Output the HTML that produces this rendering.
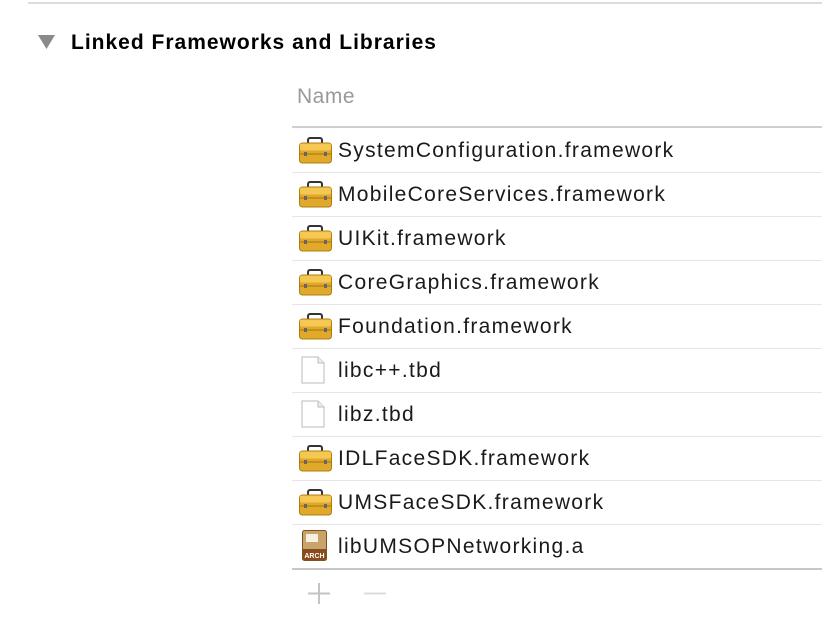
<!DOCTYPE html>
<html><head><style>
body{margin:0;width:822px;height:626px;background:#fff;font-family:"Liberation Sans",sans-serif;position:relative;overflow:hidden}
.a{position:absolute}
.row{position:absolute;left:292px;right:0;height:44px;border-bottom:1px solid #e6e6e6}
.row span{position:absolute;left:46px;top:11px;font-size:21px;letter-spacing:1.3px;color:#1a1a1a}
.row svg{position:absolute;left:7px;top:9px}
</style></head><body>
<div class="a" style="left:28px;right:0;top:2px;height:2px;background:#dcdcdc"></div>
<svg class="a" style="left:38px;top:35px" width="17" height="14"><polygon points="0,0 17,0 8.5,14" fill="#8a8a8a"/></svg>
<div class="a" style="left:71px;top:31px;font-size:21px;letter-spacing:1px;font-weight:bold;color:#000">Linked Frameworks and Libraries</div>
<div class="a" style="left:297px;top:85px;font-size:21px;letter-spacing:0.5px;color:#999">Name</div>
<div class="a" style="left:292px;right:0;top:126px;height:2px;background:#cfcfcf"></div>
<svg width="0" height="0" style="position:absolute"><defs>
<g id="tb"><rect x="9" y="1" width="14" height="6" rx="2" fill="none" stroke="#333" stroke-width="2"/><rect x="0.5" y="6" width="32" height="20" rx="3" fill="#e0a92a" stroke="#b07d12"/><rect x="1" y="6.5" width="31" height="7" rx="2" fill="#f4c852"/><line x1="1" y1="17" x2="32" y2="17" stroke="#a87414"/><rect x="5" y="15" width="3" height="4" fill="#666"/><rect x="25" y="15" width="3" height="4" fill="#666"/></g>
<g id="fl"><path d="M4 1H20L26 7V27H4Z" fill="#fff" stroke="#bbb"/><path d="M20 1V7H26" fill="#eee" stroke="#bbb"/></g>
</defs></svg>
<div class="row" style="top:128px"><svg width="34" height="28"><use href="#tb"/></svg><span>SystemConfiguration.framework</span></div>
<div class="row" style="top:172px"><svg width="34" height="28"><use href="#tb"/></svg><span>MobileCoreServices.framework</span></div>
<div class="row" style="top:216px"><svg width="34" height="28"><use href="#tb"/></svg><span>UIKit.framework</span></div>
<div class="row" style="top:260px"><svg width="34" height="28"><use href="#tb"/></svg><span>CoreGraphics.framework</span></div>
<div class="row" style="top:304px"><svg width="34" height="28"><use href="#tb"/></svg><span>Foundation.framework</span></div>
<div class="row" style="top:348px"><svg width="34" height="28" style="left:6px;top:8px"><use href="#fl"/></svg><span>libc++.tbd</span></div>
<div class="row" style="top:392px"><svg width="34" height="28" style="left:6px;top:8px"><use href="#fl"/></svg><span>libz.tbd</span></div>
<div class="row" style="top:436px"><svg width="34" height="28"><use href="#tb"/></svg><span>IDLFaceSDK.framework</span></div>
<div class="row" style="top:480px"><svg width="34" height="28"><use href="#tb"/></svg><span>UMSFaceSDK.framework</span></div>
<div class="row" style="top:524px;border-bottom:2px solid #c8c8c8"><svg width="34" height="32" style="left:10px;top:6px"><rect x="0.5" y="0.5" width="24" height="30" rx="2" fill="#c9a46a" stroke="#7a5320"/><rect x="4" y="4" width="12" height="8" fill="#f5f0e0"/><rect x="1" y="19" width="23" height="11" fill="#8a4a1e"/><text x="12.5" y="28" font-size="7" font-weight="bold" fill="#fff" text-anchor="middle" font-family="Liberation Sans">ARCH</text></svg><span>libUMSOPNetworking.a</span></div>
<svg class="a" style="left:306px;top:582px" width="80" height="24"><path d="M13 1V22M2 11.5H24" stroke="#c4c4c4" stroke-width="2"/><path d="M58 11.5H80" stroke="#dcdcdc" stroke-width="2"/></svg>
</body></html>
